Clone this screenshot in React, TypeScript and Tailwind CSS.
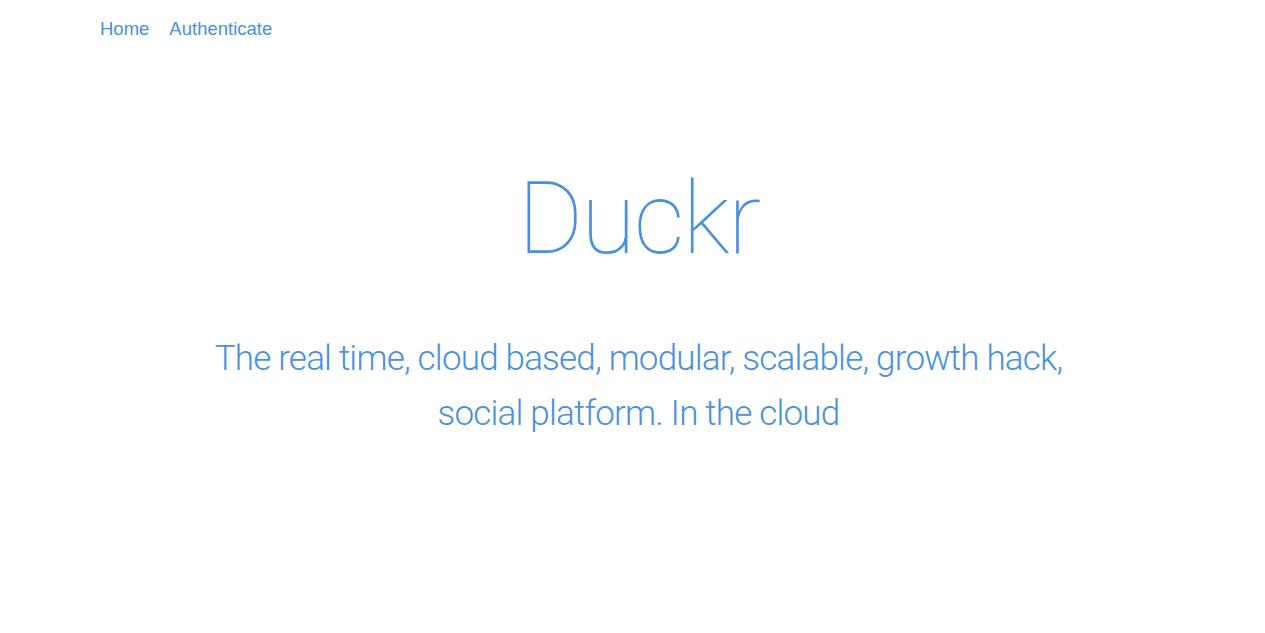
export default function App() {
  return (
    <div className="min-h-screen bg-white text-[#4a90e2]">
      <nav className="flex gap-5 px-[100px] pt-[17px] text-[18.5px] leading-[24px] font-['Liberation_Sans',sans-serif]">
        <a href="#">Home</a>
        <a href="#">Authenticate</a>
      </nav>
      <div className="flex flex-col items-center pl-[12px] text-center font-['Roboto','Liberation_Sans',sans-serif]">
        <h1 className="mt-[128px] text-[100px] leading-[100px] font-[100] tracking-[-2px]">Duckr</h1>
        <p className="mt-[62px] w-[900px] text-[35px] leading-[55px] font-[300] tracking-[-0.8px]">
          The real time, cloud based, modular, scalable, growth hack, social platform. In the cloud
        </p>
      </div>
    </div>
  );
}
